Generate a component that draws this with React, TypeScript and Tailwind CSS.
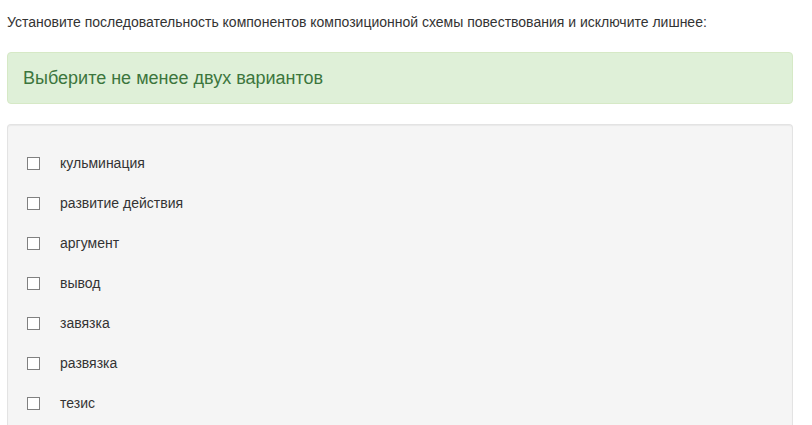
import React from "react";

const options = [
  "кульминация",
  "развитие действия",
  "аргумент",
  "вывод",
  "завязка",
  "развязка",
  "тезис",
];

export default function App() {
  return (
    <div
      className="min-h-[425px] bg-white text-[#333] pl-[7px] pt-[12px]"
      style={{ fontFamily: '"Liberation Sans", Arial, sans-serif' }}
    >
      <div className="w-[786px]">
        <p className="text-[14px] leading-[20px]">
          Установите последовательность компонентов композиционной схемы повествования и исключите лишнее:
        </p>
        <div className="mt-[20px] rounded-[4px] border border-[#d6e9c6] bg-[#dff0d8] px-[15px] py-[14px] text-[#3c763d] text-[18px] leading-[22px]">
          Выберите не менее двух вариантов
        </div>
        <div className="mt-[20px] rounded-t-[4px] border border-b-0 border-[#e3e3e3] bg-[#f5f5f5] pl-[19px] pt-[18px] pb-[20px] shadow-[inset_0_1px_1px_rgba(0,0,0,0.05)]">
          {options.map((o) => (
            <label key={o} className="flex h-[40px] items-center">
              <span className="block h-[13px] w-[13px] border border-[#808080] bg-white" />
              <span className="ml-[20px] text-[14px] leading-[20px]">{o}</span>
            </label>
          ))}
        </div>
      </div>
    </div>
  );
}
